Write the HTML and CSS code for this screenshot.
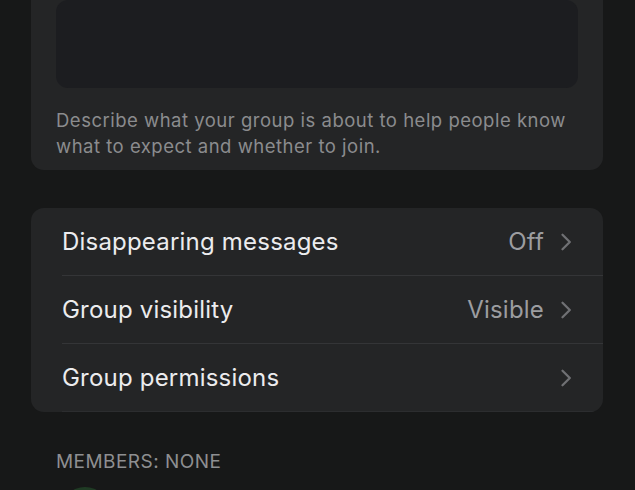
FILE: index.html
```html
<!DOCTYPE html>
<html lang="en">
<head>
<meta charset="utf-8">
<title>Group settings</title>
<link rel="stylesheet" href="styles.css">
</head>
<body>
<main class="screen">
  <section class="card describe">
    <div class="textarea"></div>
    <p class="hint">Describe what your group is about to help people know what to expect and whether to join.</p>
  </section>

  <section class="card list">
    <div class="row">
      <span class="label">Disappearing messages</span>
      <span class="value">Off</span>
      <svg class="chev" viewBox="0 0 12 18" width="12" height="18"><path d="M2.5 1.8 L9.8 9 L2.5 16.2" /></svg>
    </div>
    <div class="row">
      <span class="label">Group visibility</span>
      <span class="value">Visible</span>
      <svg class="chev" viewBox="0 0 12 18" width="12" height="18"><path d="M2.5 1.8 L9.8 9 L2.5 16.2" /></svg>
    </div>
    <div class="row">
      <span class="label">Group permissions</span>
      <svg class="chev" viewBox="0 0 12 18" width="12" height="18"><path d="M2.5 1.8 L9.8 9 L2.5 16.2" /></svg>
    </div>
  </section>

  <h2 class="section-title">MEMBERS: NONE</h2>
  <div class="member">
    <span class="avatar"></span>
  </div>
</main>
</body>
</html>
```

FILE: styles.css
```css
html, body {
  margin: 0;
  padding: 0;
  background: #171818;
  height: 100%;
  overflow: hidden;
}

.screen {
  font-family: Inter, "Noto Sans", "Liberation Sans", sans-serif;
  padding: 0 32px 0 31px;
  margin-top: -24px;
}

.card {
  background: #242526;
  border-radius: 13px;
}

.describe {
  padding: 24px 25px 11px 25px;
}

.textarea {
  height: 88px;
  background: #1c1d20;
  border-radius: 12px;
}

.hint {
  margin: 19px 0 0 0;
  font-size: 18.5px;
  line-height: 26px;
  color: #8b8c8e;
  letter-spacing: 0.5px;
}

.list {
  margin-top: 38px;
  overflow: hidden;
}

.row {
  display: flex;
  align-items: center;
  height: 68px;
  margin-left: 31px;
  padding-right: 31px;
  border-bottom: 1px solid #343537;
  box-sizing: border-box;
}

.row:last-child {
  border-bottom-color: #2c2d2f;
}

.label {
  flex: 1;
  font-size: 24px;
  color: #ececee;
  letter-spacing: 0.2px;
}

.value {
  font-size: 24px;
  color: #9c9da0;
  margin-right: 16px;
  letter-spacing: 0.2px;
}

.chev {
  display: block;
  fill: none;
  stroke: #6f7073;
  stroke-width: 2.3;
  stroke-linecap: round;
  stroke-linejoin: round;
}

.section-title {
  margin: 38px 0 0 25px;
  font-size: 19px;
  font-weight: 400;
  line-height: 24px;
  color: #8e8f91;
  letter-spacing: 0.45px;
}

.member {
  margin: 13px 0 0 30px;
}

.avatar {
  display: block;
  width: 48px;
  height: 48px;
  border-radius: 50%;
  background: #1f3b24;
}
```
